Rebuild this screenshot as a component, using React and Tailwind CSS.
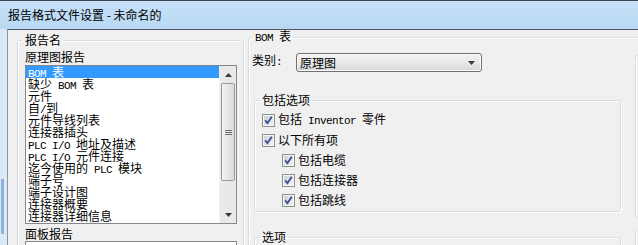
import React from "react";

const reports = [
  "BOM 表",
  "缺少 BOM 表",
  "元件",
  "自/到",
  "元件导线列表",
  "连接器插头",
  "PLC I/O 地址及描述",
  "PLC I/O 元件连接",
  "迄今使用的 PLC 模块",
  "端子号",
  "端子设计图",
  "连接器概要",
  "连接器详细信息",
];

// latin runs are drawn half-width, like the dialog's bitmap font
function T({ s }) {
  return s
    .split(/([\x20-\x7e]+)/)
    .filter(Boolean)
    .map((p, i) =>
      /^[\x20-\x7e]+$/.test(p) ? (
        <span
          key={i}
          className="font-['Liberation_Mono',monospace] text-[11px] tracking-[-0.6px] whitespace-pre"
        >
          {p}
        </span>
      ) : (
        <span key={i}>{p}</span>
      )
    );
}

function Tri({ down }) {
  return (
    <svg width="7" height="4" viewBox="0 0 7 4">
      <path d={down ? "M0 0h7L3.5 4z" : "M0 4h7L3.5 0z"} fill="#3a3a3a" />
    </svg>
  );
}

function Check({ label, indent }) {
  return (
    <div className={`flex items-center h-[20px] ${indent ? "pl-[27px]" : "pl-[7px]"}`}>
      <svg width="13" height="13" viewBox="0 0 13 13" className="shrink-0">
        <defs>
          <linearGradient id="cbg" x1="0" y1="0" x2="1" y2="1">
            <stop offset="0" stopColor="#cdd1d6" />
            <stop offset="1" stopColor="#f3f3f3" />
          </linearGradient>
        </defs>
        <rect x="0.5" y="0.5" width="12" height="12" fill="#f6f6f6" stroke="#8e8f8f" />
        <rect x="2" y="2" width="9" height="9" fill="url(#cbg)" />
        <path d="M3.2 6.3 L5.4 9.2 L9.8 2.8" stroke="#3d4f94" strokeWidth="1.9" fill="none" />
      </svg>
      <span className="ml-[3px] leading-[12px] whitespace-nowrap">
        <T s={label} />
      </span>
    </div>
  );
}

function Group({ title, className, legendClass, children }) {
  return (
    <fieldset
      className={`border border-[#d5dfe5] rounded-[3px] shadow-[inset_1px_1px_0_#fff,1px_1px_0_#fff] ${className}`}
    >
      <legend className={`leading-[12px] whitespace-nowrap ${legendClass}`}>
        <T s={title} />
      </legend>
      {children}
    </fieldset>
  );
}

export default function App() {
  return (
    <div className="w-[638px] h-[245px] overflow-hidden flex flex-col font-['Noto_Sans_CJK_SC',sans-serif] text-[12px] text-black">
      <div className="h-[29px] shrink-0 border-t border-[#3c4650] bg-linear-to-b from-[#c6e1f7] to-[#b8d8f3] flex items-center pl-[8px] leading-[12px]">
        报告格式文件设置 - 未命名的
      </div>

      <div className="flex flex-1 min-h-0">
        <div className="w-[7px] shrink-0 bg-[#dbe8f5] flex flex-col">
          <div className="h-[150px]" />
          <div className="ml-[1px] w-[3px] h-[55px] bg-[#8db3dc]" />
        </div>

        <div className="flex-1 min-w-0 overflow-hidden border-t border-l border-t-[#4d5863] border-l-[#8c99a5] bg-[#f0f0f0] flex items-start">
          {/* left: report list */}
          <Group
            title="报告名"
            className="ml-[9px] mt-[4px] w-[227px] shrink-0 pl-[7px] pt-[5px] pb-[20px]"
            legendClass="ml-[-3px] px-[3px]"
          >
            <div className="leading-[12px]">原理图报告</div>
            <div className="mt-[2px] w-[212px] h-[159px] border border-[#828790] bg-white flex">
              <div className="flex-1 min-w-0 overflow-hidden">
                {reports.map((r, i) => (
                  <div
                    key={r}
                    className={`h-[12px] leading-[12px] pl-[2px] whitespace-nowrap ${
                      i === 0 ? "bg-[#3399ff] text-white" : ""
                    }`}
                  >
                    <T s={r} />
                  </div>
                ))}
              </div>
              <div className="w-[17px] shrink-0 bg-[#e9e9e9] border-l border-[#f2f2f2] flex flex-col">
                <div className="h-[17px] flex items-center justify-center">
                  <Tri />
                </div>
                <div className="mx-[1px] h-[98px] rounded-[2px] border border-[#9a9a9a] bg-linear-to-r from-[#f4f4f4] to-[#dadada] flex flex-col items-center justify-center gap-[1px]">
                  <div className="w-[7px] h-[1px] bg-[#6f6f6f]" />
                  <div className="w-[7px] h-[1px] bg-[#6f6f6f]" />
                  <div className="w-[7px] h-[1px] bg-[#6f6f6f]" />
                </div>
                <div className="flex-1" />
                <div className="h-[17px] flex items-center justify-center">
                  <Tri down />
                </div>
              </div>
            </div>
            <div className="mt-[4px] leading-[12px]">面板报告</div>
            <div className="mt-[1px] w-[212px] h-[20px] border border-[#828790] bg-white" />
          </Group>

          {/* right: BOM settings */}
          <Group
            title="BOM 表"
            className="ml-[4px] w-[440px] shrink-0 pb-[20px]"
            legendClass="ml-[3px] px-[3px]"
          >
            <div className="flex items-start">
              <div className="w-[372px] shrink-0 flex flex-col">
                <div className="flex items-start pt-[9px] pl-[3px]">
                  <div className="w-[44px] mt-[1px] leading-[12px]">
                    <T s="类别:" />
                  </div>
                  <div className="w-[186px] h-[19px] rounded-[3px] border border-[#707070] bg-linear-to-b from-[#f3f3f3] via-[#e9e9e9] to-[#d6d6d6] shadow-[inset_0_0_0_1px_#fbfbfb] flex items-center pl-[3px] pr-[6px]">
                    <span className="flex-1 leading-[12px]">原理图</span>
                    <Tri down />
                  </div>
                </div>

                <Group
                  title="包括选项"
                  className="ml-[5px] mt-[22px] w-[367px] pt-[4px] pb-[1px]"
                  legendClass="ml-[5px] px-[2px]"
                >
                  <Check label="包括 Inventor 零件" />
                  <Check label="以下所有项" />
                  <Check label="包括电缆" indent />
                  <Check label="包括连接器" indent />
                  <Check label="包括跳线" indent />
                </Group>

                <Group
                  title="选项"
                  className="ml-[5px] mt-[19px] w-[367px] h-[40px]"
                  legendClass="ml-[5px] px-[2px]"
                />
              </div>

              <div className="ml-[14px] flex flex-col">
                <div className="mt-[11px] w-[40px] h-[163px] border border-[#d5dfe5] rounded-[3px] shadow-[inset_1px_1px_0_#fff]" />
                <div className="mt-[12px] w-[40px] h-[40px] border border-[#d5dfe5] rounded-[3px] shadow-[inset_1px_1px_0_#fff]" />
              </div>
            </div>
          </Group>
        </div>
      </div>
    </div>
  );
}
